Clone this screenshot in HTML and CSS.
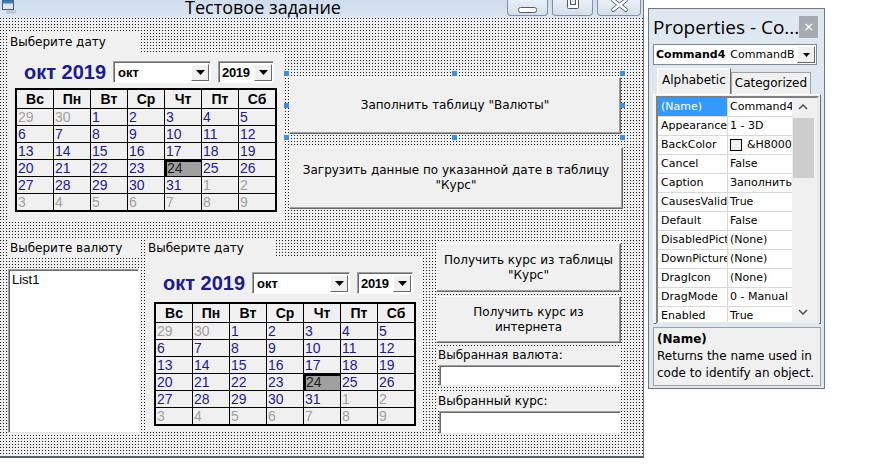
FILE: index.html
```html
<!DOCTYPE html>
<html lang="ru">
<head>
<meta charset="utf-8">
<title>Тестовое задание</title>
<link rel="stylesheet" href="styles.css">
</head>
<body>
<div class="desktop">
  <div class="form-window">
    <div class="titlebar">
      <span class="app-icon">
        <svg width="16" height="14" viewBox="0 0 16 14"><rect x="1.5" y="0.5" width="11" height="9" fill="#dfe8f2" stroke="#4a5a6a"/><rect x="1.5" y="0.5" width="11" height="3" fill="#3d7fb8"/><path d="M5 10.5h10v3H5z" fill="#b9c6d2"/></svg>
      </span>
      <span class="title">Тестовое задание</span>
      <div class="winbtns">
        <span class="wb wb-min"><svg width="19" height="6" viewBox="0 0 19 6"><rect x="0.5" y="0.5" width="18" height="5" rx="2" fill="#fff" stroke="#505c6a"/></svg></span>
        <span class="wb wb-max"><svg width="12" height="9" viewBox="0 0 12 9"><rect x="0.5" y="-3.5" width="11" height="12" rx="1" fill="#fff" stroke="#505c6a"/><rect x="3.5" y="-1.5" width="5" height="6" fill="#e6ebf1" stroke="#505c6a"/></svg></span>
        <span class="wb wb-close"><svg width="17" height="14" viewBox="0 0 17 14"><path d="M2 -2l6.5 5 6.5-5 2 2.5-5.5 4.5 5.5 4.5-2 2.5-6.5-5-6.5 5-2-2.5 5.5-4.5-5.5-4.5z" fill="#fff" stroke="#505c6a" stroke-linejoin="round"/></svg></span>
      </div>
    </div>
    <div class="client">
      <div class="row row-top">
        <div class="cal-block">
          <div class="lbl lbl-cal">Выберите дату</div>
          <div class="cal-panel">
            <div class="cal-head">
              <span class="cal-caption">окт 2019</span>
              <span class="combo combo-month"><span class="combo-text bold">окт</span><span class="combo-btn"><svg width="9" height="5" viewBox="0 0 9 5"><path d="M0 0h9L4.5 5z" fill="#000"/></svg></span></span>
              <span class="combo combo-year"><span class="combo-text year">2019</span><span class="combo-btn"><svg width="9" height="5" viewBox="0 0 9 5"><path d="M0 0h9L4.5 5z" fill="#000"/></svg></span></span>
            </div>
            <div class="cal-grid">
              <span class="dow">Вс</span><span class="dow">Пн</span><span class="dow">Вт</span><span class="dow">Ср</span><span class="dow">Чт</span><span class="dow">Пт</span><span class="dow">Сб</span>
              <span class="d o">29</span><span class="d o">30</span><span class="d">1</span><span class="d">2</span><span class="d">3</span><span class="d">4</span><span class="d">5</span>
              <span class="d">6</span><span class="d">7</span><span class="d">8</span><span class="d">9</span><span class="d">10</span><span class="d">11</span><span class="d">12</span>
              <span class="d">13</span><span class="d">14</span><span class="d">15</span><span class="d">16</span><span class="d">17</span><span class="d">18</span><span class="d">19</span>
              <span class="d">20</span><span class="d">21</span><span class="d">22</span><span class="d">23</span><span class="d sel">24</span><span class="d">25</span><span class="d">26</span>
              <span class="d">27</span><span class="d">28</span><span class="d">29</span><span class="d">30</span><span class="d">31</span><span class="d o">1</span><span class="d o">2</span>
              <span class="d o">3</span><span class="d o">4</span><span class="d o">5</span><span class="d o">6</span><span class="d o">7</span><span class="d o">8</span><span class="d o">9</span>
            </div>
          </div>
        </div>
        <div class="btn-col">
          <div class="selected-wrap">
            <div class="vbbtn btn-fill">Заполнить таблицу "Валюты"</div>
            <span class="h h-tl"></span><span class="h h-tm"></span><span class="h h-tr"></span>
            <span class="h h-ml"></span><span class="h h-mr"></span>
            <span class="h h-bl"></span><span class="h h-bm"></span><span class="h h-br"></span>
          </div>
          <div class="vbbtn btn-load">Загрузить данные по указанной дате в таблицу "Курс"</div>
        </div>
      </div>
      <div class="row row-bottom">
        <div class="list-block">
          <div class="lbl lbl-cur">Выберите валюту</div>
          <div class="listbox">List1</div>
        </div>
        <div class="cal-block cal2">
          <div class="lbl lbl-cal">Выберите дату</div>
          <div class="cal-panel">
            <div class="cal-head">
              <span class="cal-caption">окт 2019</span>
              <span class="combo combo-month"><span class="combo-text bold">окт</span><span class="combo-btn"><svg width="9" height="5" viewBox="0 0 9 5"><path d="M0 0h9L4.5 5z" fill="#000"/></svg></span></span>
              <span class="combo combo-year"><span class="combo-text year">2019</span><span class="combo-btn"><svg width="9" height="5" viewBox="0 0 9 5"><path d="M0 0h9L4.5 5z" fill="#000"/></svg></span></span>
            </div>
            <div class="cal-grid">
              <span class="dow">Вс</span><span class="dow">Пн</span><span class="dow">Вт</span><span class="dow">Ср</span><span class="dow">Чт</span><span class="dow">Пт</span><span class="dow">Сб</span>
              <span class="d o">29</span><span class="d o">30</span><span class="d">1</span><span class="d">2</span><span class="d">3</span><span class="d">4</span><span class="d">5</span>
              <span class="d">6</span><span class="d">7</span><span class="d">8</span><span class="d">9</span><span class="d">10</span><span class="d">11</span><span class="d">12</span>
              <span class="d">13</span><span class="d">14</span><span class="d">15</span><span class="d">16</span><span class="d">17</span><span class="d">18</span><span class="d">19</span>
              <span class="d">20</span><span class="d">21</span><span class="d">22</span><span class="d">23</span><span class="d sel">24</span><span class="d">25</span><span class="d">26</span>
              <span class="d">27</span><span class="d">28</span><span class="d">29</span><span class="d">30</span><span class="d">31</span><span class="d o">1</span><span class="d o">2</span>
              <span class="d o">3</span><span class="d o">4</span><span class="d o">5</span><span class="d o">6</span><span class="d o">7</span><span class="d o">8</span><span class="d o">9</span>
            </div>
          </div>
        </div>
        <div class="side-col">
          <div class="vbbtn btn-side">Получить курс из таблицы "Курс"</div>
          <div class="vbbtn btn-side btn-net">Получить курс из интернета</div>
          <div class="lbl lbl-side">Выбранная валюта:</div>
          <div class="textbox"></div>
          <div class="lbl lbl-side lbl-rate">Выбранный курс:</div>
          <div class="textbox tb-rate"></div>
        </div>
      </div>
    </div>
  </div>

  <div class="props-window">
    <div class="props-title">
      <span class="props-title-text">Properties - Co...</span>
      <span class="props-close">×</span>
    </div>
    <div class="obj-combo">
      <span class="obj-name">Command4</span>
      <span class="obj-type">CommandB</span>
      <span class="obj-btn"><svg width="7" height="4" viewBox="0 0 7 4"><path d="M0 0h7L3.5 4z" fill="#000"/></svg></span>
    </div>
    <div class="tabs">
      <span class="tab active">Alphabetic</span>
      <span class="tab">Categorized</span>
    </div>
    <div class="tabpage">
      <div class="pgrid">
        <div class="pgrid-rows">
          <div class="prow sel"><span class="pn">(Name)</span><span class="pv">Command4</span></div>
          <div class="prow"><span class="pn">Appearance</span><span class="pv">1 - 3D</span></div>
          <div class="prow"><span class="pn">BackColor</span><span class="pv"><i class="swatch"></i>&amp;H8000</span></div>
          <div class="prow"><span class="pn">Cancel</span><span class="pv">False</span></div>
          <div class="prow"><span class="pn">Caption</span><span class="pv">Заполнить</span></div>
          <div class="prow"><span class="pn">CausesValid</span><span class="pv">True</span></div>
          <div class="prow"><span class="pn">Default</span><span class="pv">False</span></div>
          <div class="prow"><span class="pn">DisabledPict</span><span class="pv">(None)</span></div>
          <div class="prow"><span class="pn">DownPicture</span><span class="pv">(None)</span></div>
          <div class="prow"><span class="pn">DragIcon</span><span class="pv">(None)</span></div>
          <div class="prow"><span class="pn">DragMode</span><span class="pv">0 - Manual</span></div>
          <div class="prow"><span class="pn">Enabled</span><span class="pv">True</span></div>
        </div>
        <div class="pscroll">
          <svg class="sc-up" width="10" height="6" viewBox="0 0 10 6"><path d="M1 5l4-4 4 4" fill="none" stroke="#505050" stroke-width="1.5"/></svg>
          <span class="sc-thumb"></span>
          <svg class="sc-down" width="10" height="6" viewBox="0 0 10 6"><path d="M1 1l4 4 4-4" fill="none" stroke="#505050" stroke-width="1.5"/></svg>
        </div>
      </div>
    </div>
    <div class="pdesc">
      <div class="pdesc-title">(Name)</div>
      <div class="pdesc-text">Returns the name used in code to identify an object.</div>
    </div>
  </div>
</div>
</body>
</html>
```

FILE: styles.css
```css
html, body {
  margin: 0;
  padding: 0;
  background: #fff;
  width: 873px;
  height: 469px;
  overflow: hidden;
}

.desktop {
  position: relative;
  width: 873px;
  height: 469px;
  background: #fff;
}

/* ---------- Form window ---------- */
.form-window {
  position: absolute;
  left: 0;
  top: 0;
  width: 643px;
  height: 456px;
  border-right: 1px solid #6e7680;
  border-bottom: 2px solid #5a6068;
  background: #f0f0f0;
  display: flex;
  flex-direction: column;
}

.titlebar {
  height: 18px;
  display: flex;
  align-items: flex-start;
  background: linear-gradient(#cfdcec, #dce6f2);
}

.app-icon {
  width: 18px;
  height: 14px;
  padding-left: 1px;
  display: flex;
}

.title {
  flex: 1;
  text-align: center;
  font-family: "Open Sans", "Noto Sans", sans-serif;
  font-size: 18px;
  line-height: 14px;
  color: #000;
  overflow: hidden;
  height: 18px;
}

.winbtns {
  display: flex;
  gap: 4px;
  padding-right: 2px;
}

.wb {
  width: 41px;
  height: 16px;
  box-sizing: border-box;
  border: 1px solid #8391a3;
  border-top: none;
  border-radius: 0 0 4px 4px;
  background: linear-gradient(#e9eff6, #d5dfea);
  display: flex;
  justify-content: center;
  align-items: flex-start;
}

.wb-min {
  align-items: flex-end;
  padding-bottom: 2px;
}

.wb-close {
  width: 44px;
}

.client {
  flex: 1;
  padding: 14px 0 0 8px;
  background-color: #f0f0f0;
  background-image: conic-gradient(from 270deg at 1px 1px, #1e1e1e 90deg, transparent 0);
  background-size: 3px 3px;
  background-position: 0 0;
  font-family: "DejaVu Sans", sans-serif;
  font-size: 12px;
}

.row {
  display: flex;
  align-items: flex-start;
}

.lbl {
  background: #f0f0f0;
  height: 20px;
  line-height: 20px;
  padding-left: 2px;
  box-sizing: border-box;
  color: #000;
  white-space: nowrap;
}

.lbl-cal {
  width: 133px;
}

/* ---------- calendar ---------- */
.cal-block {
  width: 275px;
}

.cal-panel {
  background: #f0f0f0;
  height: 168px;
  padding: 9px 0 0 7px;
  box-sizing: border-box;
}

.cal-head {
  display: flex;
  align-items: center;
  height: 22px;
}

.cal-caption {
  font-family: "Liberation Sans", Arial, sans-serif;
  font-weight: bold;
  font-size: 20px;
  color: #1c1c8c;
  padding-left: 9px;
  width: 89px;
  white-space: nowrap;
}

.combo {
  display: flex;
  align-items: center;
  height: 22px;
  box-sizing: border-box;
  background: #fff;
  border: 1px solid #a0a0a0;
  border-right-color: #fff;
  border-bottom-color: #fff;
  box-shadow: inset 1px 1px 0 #696969;
  font-family: "Liberation Sans", Arial, sans-serif;
  color: #000;
}

.combo-month {
  width: 98px;
}

.combo-year {
  width: 56px;
  margin-left: 7px;
}

.combo-text {
  flex: 1;
  padding-left: 4px;
}

.combo-text.bold {
  font-weight: bold;
  font-size: 13px;
}

.combo-text.year {
  font-weight: bold;
  font-size: 13px;
  letter-spacing: -0.3px;
  padding-left: 3px;
}

.combo-btn {
  width: 18px;
  height: 17px;
  margin-right: 1px;
  box-sizing: border-box;
  background: #f0f0f0;
  border: 1px solid #fff;
  border-right-color: #696969;
  border-bottom-color: #696969;
  display: flex;
  align-items: center;
  justify-content: center;
}

.cal-grid {
  margin-top: 5px;
  display: grid;
  grid-template-columns: repeat(7, 36px);
  grid-template-rows: 18px repeat(6, 16px);
  gap: 1px;
  width: max-content;
  background: #000;
  border: 2px solid #000;
  font-family: "Liberation Sans", Arial, sans-serif;
}

.dow {
  background: #f0f0f0;
  font-weight: bold;
  font-size: 14px;
  text-align: center;
  line-height: 19px;
  color: #000;
}

.d {
  background: #f0f0f0;
  font-size: 14px;
  line-height: 17px;
  padding-left: 1px;
  color: #1c1c8c;
}

.d.o {
  color: #a0a0a0;
}

.d.sel {
  background: #a0a0a0;
  color: #1a1a1a;
  box-shadow: inset 2px 2px 0 #000;
  padding-left: 2px;
}

/* ---------- buttons ---------- */
.btn-col {
  margin-left: 6px;
  padding-top: 45px;
  display: flex;
  flex-direction: column;
}

.vbbtn {
  box-sizing: border-box;
  background: #f0f0f0;
  border: 1px solid #fff;
  border-right-color: #696969;
  border-bottom-color: #696969;
  box-shadow: inset -1px -1px 0 #a0a0a0;
  display: flex;
  align-items: center;
  justify-content: center;
  text-align: center;
  color: #000;
  line-height: 15px;
}

.selected-wrap {
  position: relative;
  width: 333px;
}

.btn-fill {
  width: 332px;
  height: 57px;
}

.btn-load {
  margin-top: 13px;
  width: 334px;
  height: 62px;
  padding: 0 6px;
}

.h {
  position: absolute;
  width: 5px;
  height: 5px;
  background: #3d8ee8;
}
.h-tl { left: -5px; top: -6px; }
.h-tm { left: 163px; top: -6px; }
.h-tr { left: 331px; top: -6px; }
.h-ml { left: -5px; top: 26px; }
.h-mr { left: 331px; top: 26px; }
.h-bl { left: -5px; top: 58px; }
.h-bm { left: 163px; top: 58px; }
.h-br { left: 331px; top: 58px; }

/* ---------- bottom row ---------- */
.row-bottom {
  margin-top: 18px;
}

.list-block {
  width: 131px;
}

.lbl-cur {
  width: 131px;
}

.listbox {
  margin-top: 11px;
  width: 131px;
  height: 164px;
  box-sizing: border-box;
  background: #fff;
  border: 1px solid #a0a0a0;
  border-right-color: #fff;
  border-bottom-color: #e3e3e3;
  box-shadow: inset 1px 1px 0 #696969;
  padding: 2px 0 0 3px;
  font-family: "Liberation Sans", Arial, sans-serif;
  font-size: 13px;
  color: #000;
}

.cal2 {
  margin-left: 7px;
  width: 277px;
}

.cal2 .lbl-cal {
  width: 130px;
}

.cal2 .cal-panel {
  height: 172px;
  padding-left: 8px;
  padding-top: 14px;
}

.cal2 .cal-head {
  height: 22px;
}

.cal2 .cal-grid {
  margin-top: 8px;
}

.side-col {
  margin-left: 13px;
  padding-top: 5px;
  width: 185px;
  display: flex;
  flex-direction: column;
}

.btn-side {
  width: 185px;
  height: 49px;
  padding: 0 4px;
}

.btn-net {
  margin-top: 4px;
  height: 47px;
}

.lbl-side {
  margin-top: 3px;
  width: 185px;
  height: 19px;
  line-height: 18px;
}

.lbl-rate {
  margin-top: 6px;
}

.textbox {
  margin-left: 3px;
  width: 182px;
  height: 21px;
  box-sizing: border-box;
  background: #fff;
  border: 1px solid #a0a0a0;
  border-right-color: #fff;
  border-bottom-color: #e3e3e3;
  box-shadow: inset 1px 1px 0 #696969;
}

.tb-rate {
  height: 23px;
}

/* ---------- Properties window ---------- */
.props-window {
  position: absolute;
  left: 648px;
  top: 8px;
  width: 177px;
  height: 381px;
  box-sizing: border-box;
  border: 1px solid #6e7680;
  background: #dfe7f1;
  padding: 0 3px 0 4px;
  font-family: "DejaVu Sans", sans-serif;
  font-size: 11px;
  color: #000;
  display: flex;
  flex-direction: column;
}

.props-title {
  height: 35px;
  display: flex;
  align-items: center;
  justify-content: space-between;
}

.props-title-text {
  font-family: "Open Sans", "Noto Sans", sans-serif;
  font-size: 19px;
  white-space: nowrap;
}

.props-close {
  width: 22px;
  height: 22px;
  margin-right: 3px;
  background: #a6abb2;
  color: #fff;
  font-size: 13px;
  line-height: 21px;
  text-align: center;
  font-family: "DejaVu Sans", sans-serif;
}

.obj-combo {
  height: 21px;
  margin-right: 4px;
  box-sizing: border-box;
  background: #fff;
  border: 1px solid #828790;
  display: flex;
  align-items: center;
  font-size: 11px;
  white-space: nowrap;
  overflow: hidden;
}

.obj-name {
  font-weight: bold;
  padding-left: 2px;
  padding-right: 5px;
}

.obj-type {
  flex: 1;
  overflow: hidden;
}

.obj-btn {
  width: 18px;
  height: 17px;
  margin-right: 1px;
  box-sizing: border-box;
  background: #f0f0f0;
  border: 1px solid #fff;
  border-right-color: #696969;
  border-bottom-color: #696969;
  display: flex;
  align-items: center;
  justify-content: center;
}

.tabs {
  margin-top: 4px;
  height: 25px;
  display: flex;
  align-items: flex-end;
  padding-left: 4px;
}

.tab {
  box-sizing: border-box;
  height: 22px;
  padding: 0 3px;
  line-height: 20px;
  font-size: 12px;
  background: #f0f0f0;
  border: 1px solid #a0a0a0;
  border-bottom: none;
  white-space: nowrap;
}

.tab.active {
  height: 26px;
  background: #f0f0f0;
  border-color: #fff #696969 transparent #fff;
  line-height: 22px;
  padding: 0 4px;
}

.tabpage {
  height: 230px;
  box-sizing: border-box;
  background: #f0f0f0;
  border: 1px solid #fff;
  border-right-color: #696969;
  border-bottom-color: #696969;
  padding: 1px 1px 0 2px;
}

.pgrid {
  height: 228px;
  box-sizing: border-box;
  border: 2px solid #808080;
  border-right-color: #e8e8e8;
  border-bottom-color: #e8e8e8;
  background: #fff;
  display: flex;
  overflow: hidden;
}

.pgrid-rows {
  width: 134px;
  overflow: hidden;
}

.prow {
  display: flex;
  height: 19px;
  box-sizing: border-box;
  border-bottom: 1px solid #d8d8d8;
  line-height: 18px;
  white-space: nowrap;
}

.pn {
  width: 70px;
  flex: none;
  overflow: hidden;
  padding-left: 3px;
  box-sizing: border-box;
  border-right: 1px solid #d8d8d8;
}

.pv {
  flex: 1;
  overflow: hidden;
  padding-left: 2px;
  display: flex;
  align-items: center;
}

.prow.sel .pn {
  background: #3399ff;
  color: #fff;
}

.swatch {
  display: inline-block;
  flex: none;
  width: 12px;
  height: 12px;
  box-sizing: border-box;
  border: 1px solid #000;
  background: #f0f0f0;
  margin-right: 5px;
}

.pscroll {
  flex: 1;
  background: #f0f0f0;
  position: relative;
}

.sc-up {
  position: absolute;
  left: 6px;
  top: 6px;
}

.sc-thumb {
  position: absolute;
  left: 1px;
  right: 3px;
  top: 20px;
  height: 60px;
  background: #cdcdcd;
}

.sc-down {
  position: absolute;
  left: 6px;
  bottom: 7px;
}

.pdesc {
  margin-top: 3px;
  margin-right: 0;
  height: 59px;
  box-sizing: border-box;
  border: 1px solid #a0a0a0;
  background: #f0f0f0;
  padding: 3px 3px 0 3px;
  font-size: 12px;
  line-height: 17px;
}

.pdesc-title {
  font-weight: bold;
}
```
